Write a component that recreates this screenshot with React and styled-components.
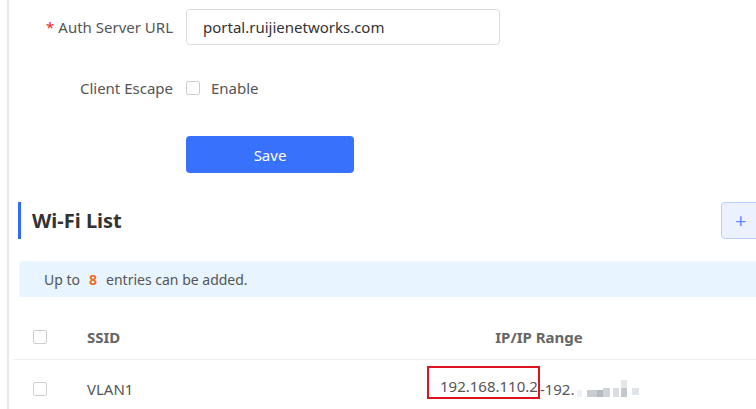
import styled, { createGlobalStyle } from 'styled-components';

const GlobalStyle = createGlobalStyle`
  body {
    margin: 0;
    overflow: hidden;
    background: #fff;
    font-family: "Noto Sans", "Open Sans", Arial, sans-serif;
    color: #555;
  }
`;

const Page = styled.div`
  margin-left: 7px;
  border-left: 2px solid #e8e8e8;
  height: 409px;
  width: 900px;
  padding-top: 9px;
  box-sizing: border-box;
`;

const FormRow = styled.div`
  display: flex;
  align-items: center;
  height: ${(p) => p.h || 36}px;
  margin-bottom: ${(p) => p.mb || 0}px;
`;

const Label = styled.div`
  width: 164px;
  padding-right: 13px;
  box-sizing: content-box;
  text-align: right;
  font-size: 15px;
  color: #555;
  white-space: nowrap;
`;

const Star = styled.span`
  color: #f5222d;
  margin-right: 4px;
`;

const Input = styled.div`
  width: 314px;
  height: 36px;
  box-sizing: border-box;
  border: 1px solid #dcdcdc;
  border-radius: 4px;
  padding-left: 16px;
  display: flex;
  align-items: center;
  font-size: 15px;
  color: #333;
`;

const Check = styled.span`
  display: inline-block;
  width: 14px;
  height: 14px;
  box-sizing: border-box;
  border: 1px solid #cfcfcf;
  border-radius: 2px;
  background: #fff;
  flex-shrink: 0;
`;

const CheckText = styled.span`
  margin-left: 11px;
  font-size: 15px;
  color: #555;
`;

const SaveButton = styled.button`
  margin-left: 177px;
  width: 168px;
  height: 37px;
  border: none;
  border-radius: 4px;
  background: #3872fc;
  color: #fff;
  font-family: inherit;
  font-size: 15px;
  cursor: pointer;
`;

const Content = styled.div`
  padding-left: 9px;
  margin-top: 29px;
`;

const SectionHead = styled.div`
  display: flex;
  align-items: center;
  height: 37px;
  width: 800px;
`;

const TitleBar = styled.div`
  width: 3px;
  height: 37px;
  background: #2f6bff;
`;

const Title = styled.h2`
  margin: 0 0 0 11px;
  font-size: 20px;
  font-weight: 700;
  color: #333;
  flex: 1;
`;

const AddButton = styled.button`
  margin-right: 17px;
  width: 80px;
  height: 37px;
  border: 1px solid #b9cdff;
  border-radius: 4px;
  background: #ebf1ff;
  color: #5b8cff;
  font-family: inherit;
  font-size: 20px;
  text-align: left;
  padding-left: 13px;
  line-height: 1;
`;

const Notice = styled.div`
  margin: 22px 0 0 1px;
  height: 36px;
  width: 780px;
  background: #e8f4ff;
  border-radius: 4px;
  display: flex;
  align-items: center;
  padding-left: 25px;
  box-sizing: border-box;
  font-size: 14px;
  color: #555;
`;

const Count = styled.b`
  color: #f26b1d;
  margin: 0 9px;
`;

const Table = styled.div`
  margin: 18px 0 0 -5px;
  width: 800px;
`;

const Row = styled.div`
  display: grid;
  grid-template-columns: 74px 327px 250px 1fr;
  align-items: center;
  height: ${(p) => p.h}px;
  border-bottom: ${(p) => (p.head ? '1px solid #efefef' : 'none')};
  font-size: 15px;
  font-weight: ${(p) => (p.head ? 700 : 400)};
  color: ${(p) => (p.head ? '#666' : '#555')};
`;

const CheckCell = styled.div`
  padding-left: 20px;
  display: flex;
  align-items: center;
`;

const Cell = styled.div`
  text-align: ${(p) => p.align || 'left'};
  white-space: nowrap;
`;

const Marked = styled.span`
  display: inline-block;
  border: 2px solid #e0141e;
  padding: 0 0 0 11px;
  height: 29px;
  line-height: 36px;
  vertical-align: middle;
  margin-top: -14px;
`;

const IpWrap = styled.div`
  display: flex;
  align-items: center;
  padding-left: 13px;
  color: #555;
  white-space: nowrap;
`;

// pixelated (blurred-out) end of the address range
const Mosaic = () => (
  <svg width="70" height="20" viewBox="0 0 70 20" style={{ marginLeft: 3, marginTop: 2 }}>
    <rect x="0" y="10" width="5" height="7" fill="#eef2f6" />
    <rect x="10" y="10" width="10" height="7" fill="#c9cdd3" />
    <rect x="20" y="10" width="6" height="7" fill="#b5bac1" />
    <rect x="26" y="8" width="7" height="9" fill="#d0d3d8" />
    <rect x="36" y="8" width="6" height="9" fill="#dadde1" />
    <rect x="44" y="0" width="6" height="8" fill="#e4e6ea" />
    <rect x="44" y="8" width="6" height="9" fill="#c4c8ce" />
    <rect x="55" y="8" width="7" height="7" fill="#e0e3e7" />
  </svg>
);

export default function App() {
  return (
    <>
      <GlobalStyle />
      <Page>
        <FormRow mb={27}>
          <Label>
            <Star>*</Star>Auth Server URL
          </Label>
          <Input>portal.ruijienetworks.com</Input>
        </FormRow>
        <FormRow h={32} mb={32}>
          <Label>Client Escape</Label>
          <Check />
          <CheckText>Enable</CheckText>
        </FormRow>
        <SaveButton>Save</SaveButton>

        <Content>
          <SectionHead>
            <TitleBar />
            <Title>Wi-Fi List</Title>
            <AddButton>+</AddButton>
          </SectionHead>

          <Notice>
            Up to<Count>8</Count>entries can be added.
          </Notice>

          <Table>
            <Row head h={44}>
              <CheckCell>
                <Check />
              </CheckCell>
              <Cell>SSID</Cell>
              <Cell align="center">IP/IP Range</Cell>
              <Cell />
            </Row>
            <Row h={58}>
              <CheckCell>
                <Check />
              </CheckCell>
              <Cell>VLAN1</Cell>
              <IpWrap>
                <Marked>192.168.110.2</Marked>
                <span>-192.</span>
                <Mosaic />
              </IpWrap>
              <Cell />
            </Row>
          </Table>
        </Content>
      </Page>
    </>
  );
}
